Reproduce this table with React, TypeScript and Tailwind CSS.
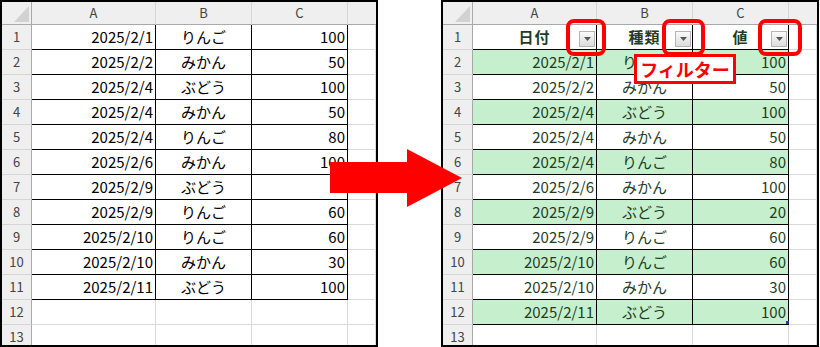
import type { FC, ReactNode } from "react";

type Row = { n: number; date?: string; kind?: string; value?: string; green?: boolean };

const leftRows: Row[] = [
  { n: 1, date: "2025/2/1", kind: "りんご", value: "100" },
  { n: 2, date: "2025/2/2", kind: "みかん", value: "50" },
  { n: 3, date: "2025/2/4", kind: "ぶどう", value: "100" },
  { n: 4, date: "2025/2/4", kind: "みかん", value: "50" },
  { n: 5, date: "2025/2/4", kind: "りんご", value: "80" },
  { n: 6, date: "2025/2/6", kind: "みかん", value: "100" },
  { n: 7, date: "2025/2/9", kind: "ぶどう", value: "" },
  { n: 8, date: "2025/2/9", kind: "りんご", value: "60" },
  { n: 9, date: "2025/2/10", kind: "りんご", value: "60" },
  { n: 10, date: "2025/2/10", kind: "みかん", value: "30" },
  { n: 11, date: "2025/2/11", kind: "ぶどう", value: "100" },
  { n: 12 },
  { n: 13 },
];

const rightRows: Row[] = [
  { n: 2, date: "2025/2/1", kind: "りんご", value: "100", green: true },
  { n: 3, date: "2025/2/2", kind: "みかん", value: "50" },
  { n: 4, date: "2025/2/4", kind: "ぶどう", value: "100", green: true },
  { n: 5, date: "2025/2/4", kind: "みかん", value: "50" },
  { n: 6, date: "2025/2/4", kind: "りんご", value: "80", green: true },
  { n: 7, date: "2025/2/6", kind: "みかん", value: "100" },
  { n: 8, date: "2025/2/9", kind: "ぶどう", value: "20", green: true },
  { n: 9, date: "2025/2/9", kind: "りんご", value: "60" },
  { n: 10, date: "2025/2/10", kind: "りんご", value: "60", green: true },
  { n: 11, date: "2025/2/10", kind: "みかん", value: "30" },
  { n: 12, date: "2025/2/11", kind: "ぶどう", value: "100", green: true },
  { n: 13 },
];

const GRID = "grid grid-cols-[30px_124px_96px_96px_1fr]";

const ColHeader: FC<{ children?: ReactNode; last?: boolean }> = ({ children, last }) => (
  <div
    className={
      last
        ? "h-[23px] bg-[#efefef] border-b border-[#a9a9a9]"
        : "h-[23px] bg-[#efefef] border-b border-r border-[#a9a9a9] border-r-[#d6d6d6] flex items-center justify-center text-[13px] text-[#444]"
    }
  >
    {children}
  </div>
);

const RowHeader: FC<{ n: number }> = ({ n }) => (
  <div className="h-[25px] bg-[#efefef] border-r border-b border-r-[#a9a9a9] border-b-[#d6d6d6] flex items-center justify-center text-[13px] text-[#444]">
    {n}
  </div>
);

const Cell: FC<{
  children?: ReactNode;
  table?: boolean;
  green?: boolean;
  align?: "right" | "center";
  tint?: boolean;
}> = ({ children, table, green, align = "right", tint }) => {
  const border = table ? "border-r border-b border-black" : "border-r border-b border-[#dadada]";
  const bg = green ? "bg-[#c6efce]" : "bg-white";
  const al = align === "right" ? "justify-end pr-[2px]" : "justify-center";
  const color = tint ? "text-[#1f3d24]" : "text-black";
  return (
    <div className={`h-[25px] flex items-center text-[15px] ${border} ${bg} ${al} ${color}`}>{children}</div>
  );
};

const Corner: FC = () => (
  <div className="h-[23px] bg-[#efefef] border-b border-r border-[#a9a9a9] flex items-end justify-end pr-[2px] pb-[2px]">
    <svg width="15" height="16" viewBox="0 0 15 16">
      <polygon points="15,0 15,16 0,16" fill="#d2d2d2" />
    </svg>
  </div>
);

const FilterButton: FC = () => (
  <span className="absolute right-[1px] bottom-[2px] w-[16px] h-[16px] border border-[#b5b5b5] bg-gradient-to-b from-[#fbfbfb] to-[#dcdcdc] flex items-center justify-center">
    <svg width="7" height="4" viewBox="0 0 7 4">
      <polygon points="0,0 7,0 3.5,4" fill="#555" />
    </svg>
  </span>
);

const HeaderCell: FC<{ children: ReactNode }> = ({ children }) => (
  <div className="relative h-[25px] flex items-center justify-center border-r border-b border-black bg-white text-[15px] font-bold text-[#1f3d24] tracking-[1px]">
    {children}
    <FilterButton />
  </div>
);

const LeftSheet: FC = () => (
  <div className="relative w-[378px] h-[347px] border-2 border-black bg-white overflow-hidden">
    <div className={GRID}>
      <Corner />
      <ColHeader>A</ColHeader>
      <ColHeader>B</ColHeader>
      <ColHeader>C</ColHeader>
      <ColHeader last />
      {leftRows.map((r) => {
        const t = r.date !== undefined;
        return [
          <RowHeader key={`h${r.n}`} n={r.n} />,
          <Cell key={`a${r.n}`} table={t}>{r.date}</Cell>,
          <Cell key={`b${r.n}`} table={t} align="center">{r.kind}</Cell>,
          <Cell key={`c${r.n}`} table={t}>{r.value}</Cell>,
          <Cell key={`d${r.n}`} />,
        ];
      })}
    </div>
  </div>
);

const RightSheet: FC = () => (
  <div className="relative w-[378px] h-[347px] border-2 border-black bg-white overflow-hidden">
    <div className={GRID}>
      <Corner />
      <ColHeader>A</ColHeader>
      <ColHeader>B</ColHeader>
      <ColHeader>C</ColHeader>
      <ColHeader last />
      <RowHeader n={1} />
      <HeaderCell>日付</HeaderCell>
      <HeaderCell>種類</HeaderCell>
      <HeaderCell>値</HeaderCell>
      <Cell />
      {rightRows.map((r) => {
        const t = r.date !== undefined;
        return [
          <RowHeader key={`h${r.n}`} n={r.n} />,
          <Cell key={`a${r.n}`} table={t} green={r.green} tint>{r.date}</Cell>,
          <Cell key={`b${r.n}`} table={t} green={r.green} tint align="center">{r.kind}</Cell>,
          <Cell key={`c${r.n}`} table={t} green={r.green} tint>{r.value}</Cell>,
          <Cell key={`d${r.n}`} />,
        ];
      })}
    </div>
    {/* table resize handle */}
    <span className="absolute left-[343px] top-[319px] w-[3px] h-[3px] bg-[#2b3f8f]" />
    {/* red highlights round the filter buttons */}
    <span className="absolute left-[123px] top-[17px] w-[40px] h-[37px] border-4 border-[#ff0000] rounded-[8px]" />
    <span className="absolute left-[219px] top-[17px] w-[43px] h-[37px] border-4 border-[#ff0000] rounded-[8px]" />
    <span className="absolute left-[315px] top-[17px] w-[44px] h-[37px] border-4 border-[#ff0000] rounded-[8px]" />
    <div className="absolute left-[191px] top-[52px] w-[102px] h-[30px] border-[3px] border-[#ff0000] bg-white flex items-center justify-center text-[18px] leading-none font-bold text-[#ff0000]">
      フィルター
    </div>
  </div>
);

export default function App() {
  return (
    <div
      className="relative w-[820px] h-[347px] bg-white flex gap-[63px] overflow-hidden"
      style={{ fontFamily: '"Noto Sans CJK JP", "Noto Sans", sans-serif' }}
    >
      <LeftSheet />
      <RightSheet />
      <svg className="absolute left-0 top-0 pointer-events-none" width="820" height="347" viewBox="0 0 820 347">
        <polygon
          points="330,162 407,162 407,149 462,178 407,207 407,193 330,193"
          fill="#ff0000"
        />
      </svg>
    </div>
  );
}
